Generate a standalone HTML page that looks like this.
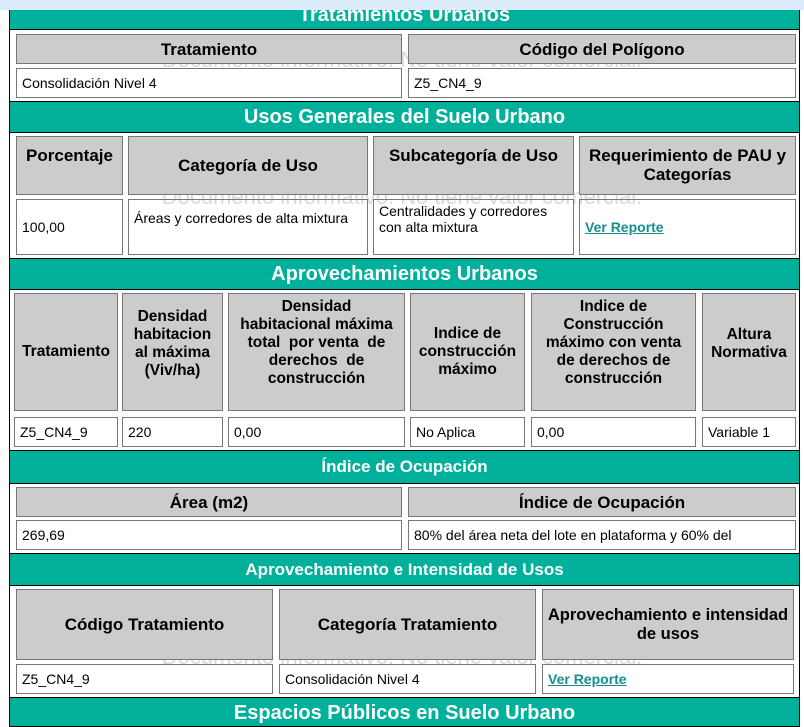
<!DOCTYPE html>
<html><head><meta charset="utf-8"><style>
*{margin:0;padding:0;box-sizing:border-box}
body{width:804px;height:708px;overflow:hidden;background:#fff;position:relative;font-family:"Liberation Sans",Arial,sans-serif;color:#000}
.top{position:absolute;left:0;top:0;width:804px;height:10px;background:#dcecfb}
.wrap{position:absolute;left:9px;top:10px;width:791px;height:698px;border-left:1px solid #000;border-right:1px solid #000}
.bar{position:absolute;left:9px;width:791px;background:#00b09b;color:#fff;font-weight:bold;text-align:center;border:1px solid #000;overflow:hidden;white-space:nowrap}
.b18{font-size:20px}.b15{font-size:17px}
.c{position:absolute;border:1px solid #777;font-size:14px;padding:0 5px;display:flex;align-items:center}
.h{background:#ccc;font-weight:bold;font-size:17px;justify-content:center;text-align:center;line-height:19px}
.t{align-items:flex-start;padding-top:3px}
.a{font-size:15.5px;line-height:18px}
.wm{position:absolute;left:0;width:804px;text-align:center;font-size:22px;color:#dadada;white-space:nowrap}
a{color:#138f8f;font-weight:bold;text-decoration:underline}
</style></head><body>
<div class="top"></div>
<div class="wrap"></div>
<div class="wm" style="top:47px">Documento informativo. No tiene valor comercial.</div>
<div class="wm" style="top:184px">Documento informativo. No tiene valor comercial.</div>
<div class="wm" style="top:644px">Documento informativo. No tiene valor comercial.</div>

<div class="bar b18" style="top:10px;height:20px;border-top:none"><span style="position:relative;top:-9px;line-height:28px">Tratamientos Urbanos</span></div>
<div class="c h" style="left:16px;top:34px;width:386px;height:30px">Tratamiento</div>
<div class="c h" style="left:408px;top:34px;width:388px;height:30px">Código del Polígono</div>
<div class="c" style="left:16px;top:68px;width:386px;height:30px">Consolidación Nivel 4</div>
<div class="c" style="left:408px;top:68px;width:388px;height:30px">Z5_CN4_9</div>

<div class="bar b18" style="top:101px;height:32px;line-height:30px">Usos Generales del Suelo Urbano</div>
<div class="c h t" style="left:16px;top:136px;width:107px;height:59px;padding-top:9px">Porcentaje</div>
<div class="c h" style="left:128px;top:136px;width:240px;height:59px">Categoría de Uso</div>
<div class="c h t" style="left:373px;top:136px;width:201px;height:59px;padding-top:9px">Subcategoría de Uso</div>
<div class="c h t" style="left:579px;top:136px;width:217px;height:59px;padding-top:9px">Requerimiento de PAU y Categorías</div>
<div class="c" style="left:16px;top:199px;width:107px;height:56px">100,00</div>
<div class="c t" style="left:128px;top:199px;width:240px;height:56px;padding-top:10px">Áreas y corredores de alta mixtura</div>
<div class="c t" style="left:373px;top:199px;width:201px;height:56px;line-height:16px">Centralidades y corredores con alta mixtura</div>
<div class="c" style="left:579px;top:199px;width:217px;height:56px"><a>Ver Reporte</a></div>

<div class="bar b18" style="top:258px;height:32px;line-height:30px">Aprovechamientos Urbanos</div>
<div class="c h a" style="left:14px;top:293px;width:104px;height:118px">Tratamiento</div>
<div class="c h a" style="left:122px;top:293px;width:101px;height:118px;align-items:flex-start;padding-top:14px">Densidad habitacion al máxima (Viv/ha)</div>
<div class="c h a" style="left:228px;top:293px;width:177px;height:118px;align-items:flex-start;padding:4px 8px 0">Densidad habitacional máxima total&nbsp; por venta&nbsp; de derechos&nbsp; de construcción</div>
<div class="c h a" style="left:410px;top:293px;width:115px;height:118px">Indice de construcción máximo</div>
<div class="c h a" style="left:531px;top:293px;width:165px;height:118px;align-items:flex-start;padding-top:4px">Indice de Construcción máximo con venta de derechos de construcción</div>
<div class="c h a" style="left:702px;top:293px;width:94px;height:118px;align-items:flex-start;padding-top:32px">Altura Normativa</div>
<div class="c" style="left:14px;top:417px;width:104px;height:30px">Z5_CN4_9</div>
<div class="c" style="left:122px;top:417px;width:101px;height:30px">220</div>
<div class="c" style="left:228px;top:417px;width:177px;height:30px">0,00</div>
<div class="c" style="left:410px;top:417px;width:115px;height:30px">No Aplica</div>
<div class="c" style="left:531px;top:417px;width:165px;height:30px">0,00</div>
<div class="c" style="left:702px;top:417px;width:94px;height:30px">Variable 1</div>

<div class="bar b15" style="top:450px;height:34px;line-height:32px">Índice de Ocupación</div>
<div class="c h" style="left:16px;top:487px;width:386px;height:30px">Área (m2)</div>
<div class="c h" style="left:408px;top:487px;width:388px;height:30px">Índice de Ocupación</div>
<div class="c" style="left:16px;top:520px;width:386px;height:30px">269,69</div>
<div class="c" style="left:408px;top:520px;width:388px;height:30px">80% del área neta del lote en plataforma y 60% del</div>

<div class="bar b15" style="top:553px;height:33px;line-height:31px">Aprovechamiento e Intensidad de Usos</div>
<div class="c h" style="left:16px;top:589px;width:257px;height:71px">Código Tratamiento</div>
<div class="c h" style="left:279px;top:589px;width:257px;height:71px">Categoría Tratamiento</div>
<div class="c h" style="left:542px;top:589px;width:252px;height:71px;padding:0 1px;font-size:16.5px">Aprovechamiento e intensidad de usos</div>
<div class="c" style="left:16px;top:664px;width:257px;height:30px">Z5_CN4_9</div>
<div class="c" style="left:279px;top:664px;width:257px;height:30px">Consolidación Nivel 4</div>
<div class="c" style="left:542px;top:664px;width:252px;height:30px"><a>Ver Reporte</a></div>

<div class="bar b18" style="top:697px;height:30px;line-height:30px">Espacios Públicos en Suelo Urbano</div>
</body></html>
